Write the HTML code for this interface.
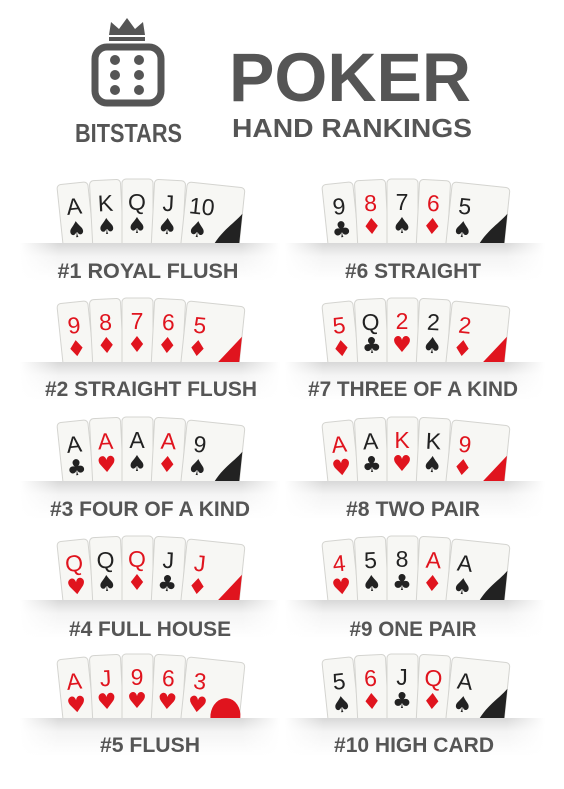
<!DOCTYPE html>
<html><head><meta charset="utf-8"><style>
html,body{margin:0;padding:0;background:#fff;}
svg{display:block;font-family:"Liberation Sans",sans-serif;}
.r{font-size:23px;text-anchor:middle;font-family:"Liberation Sans",sans-serif;}
.s{font-size:22px;text-anchor:middle;font-family:"DejaVu Sans",sans-serif;}
.b{fill:#222}.d{fill:#e0141e}
.lab{font-size:21px;font-weight:bold;fill:#555;text-anchor:middle;}
</style></head><body>
<svg width="564" height="789" viewBox="0 0 564 789" xmlns="http://www.w3.org/2000/svg">
<defs>
<linearGradient id="sh" x1="0" y1="0" x2="0" y2="1">
<stop offset="0" stop-color="#d8d8d8"/><stop offset="0.35" stop-color="#f4f4f4"/><stop offset="1" stop-color="#fff"/>
</linearGradient>
<linearGradient id="sf" x1="0" y1="0" x2="1" y2="0">
<stop offset="0" stop-color="#fff" stop-opacity="1"/><stop offset="0.15" stop-color="#fff" stop-opacity="0"/><stop offset="0.85" stop-color="#fff" stop-opacity="0"/><stop offset="1" stop-color="#fff" stop-opacity="1"/>
</linearGradient>
<g id="card"><rect x="0" y="0" width="31" height="72" rx="4" fill="#f7f7f4" stroke="#d4d4d0" stroke-width="1"/></g>
<g id="last"><rect x="0" y="0" width="58" height="72" rx="4" fill="#f7f7f4" stroke="#d4d4d0" stroke-width="1"/></g>
</defs>

<!-- logo -->
<g fill="#555">
<path d="M109 35 L111 22 L119 29 L127 18 L135 29 L143 22 L145 35 Z"/>
<rect x="109" y="37" width="36" height="4"/>
<rect x="95" y="47" width="66" height="56" rx="12" fill="none" stroke="#555" stroke-width="7"/>
<circle cx="115" cy="60" r="5"/><circle cx="139" cy="60" r="5"/>
<circle cx="115" cy="75" r="5"/><circle cx="139" cy="75" r="5"/>
<circle cx="115" cy="90" r="5"/><circle cx="139" cy="90" r="5"/>
<text x="75" y="142" font-size="26" font-weight="bold" textLength="107" lengthAdjust="spacingAndGlyphs">BITSTARS</text>
<text x="229" y="101" font-size="69" font-weight="bold" textLength="242" lengthAdjust="spacingAndGlyphs">POKER</text>
<text x="232" y="137" font-size="26" font-weight="bold" textLength="240" lengthAdjust="spacingAndGlyphs">HAND RANKINGS</text>
</g>

<!-- HAND 1 -->
<g transform="translate(64,183)">
<g transform="rotate(-6 15 70)" ><use href="#card"/><text class="r b" x="15" y="31">A</text><text class="s b" x="15" y="54">♠</text></g>
<g transform="translate(29,-3) rotate(-3 15 70)"><use href="#card"/><text class="r b" x="15" y="31">K</text><text class="s b" x="15" y="54">♠</text></g>
<g transform="translate(58,-4)"><use href="#card"/><text class="r b" x="15" y="31">Q</text><text class="s b" x="15" y="54">♠</text></g>
<g transform="translate(87,-3) rotate(3 15 70)"><use href="#card"/><text class="r b" x="15" y="31">J</text><text class="s b" x="15" y="54">♠</text></g>
<g transform="translate(116,0) rotate(6 15 70)"><use href="#last"/><text class="r b" x="17" y="31">10</text><text class="s b" x="15" y="54">♠</text><path class="b" d="M58 26 C50 38 36 46 28 72 L58 72 Z"/></g>
</g>
<!-- HAND 6 -->
<g transform="translate(329,183)">
<g transform="rotate(-6 15 70)"><use href="#card"/><text class="r b" x="15" y="31">9</text><text class="s b" x="15" y="54">♣</text></g>
<g transform="translate(29,-3) rotate(-3 15 70)"><use href="#card"/><text class="r d" x="15" y="31">8</text><text class="s d" x="15" y="54">♦</text></g>
<g transform="translate(58,-4)"><use href="#card"/><text class="r b" x="15" y="31">7</text><text class="s b" x="15" y="54">♠</text></g>
<g transform="translate(87,-3) rotate(3 15 70)"><use href="#card"/><text class="r d" x="15" y="31">6</text><text class="s d" x="15" y="54">♦</text></g>
<g transform="translate(116,0) rotate(6 15 70)"><use href="#last"/><text class="r b" x="15" y="31">5</text><text class="s b" x="15" y="54">♠</text><path class="b" d="M58 26 C50 38 36 46 28 72 L58 72 Z"/></g>
</g>
<!-- HAND 2 -->
<g transform="translate(64,302)">
<g transform="rotate(-6 15 70)"><use href="#card"/><text class="r d" x="15" y="31">9</text><text class="s d" x="15" y="54">♦</text></g>
<g transform="translate(29,-3) rotate(-3 15 70)"><use href="#card"/><text class="r d" x="15" y="31">8</text><text class="s d" x="15" y="54">♦</text></g>
<g transform="translate(58,-4)"><use href="#card"/><text class="r d" x="15" y="31">7</text><text class="s d" x="15" y="54">♦</text></g>
<g transform="translate(87,-3) rotate(3 15 70)"><use href="#card"/><text class="r d" x="15" y="31">6</text><text class="s d" x="15" y="54">♦</text></g>
<g transform="translate(116,0) rotate(6 15 70)"><use href="#last"/><text class="r d" x="15" y="31">5</text><text class="s d" x="15" y="54">♦</text><path class="d" d="M58 30 L26 72 L58 72 Z"/></g>
</g>
<!-- HAND 7 -->
<g transform="translate(329,302)">
<g transform="rotate(-6 15 70)"><use href="#card"/><text class="r d" x="15" y="31">5</text><text class="s d" x="15" y="54">♦</text></g>
<g transform="translate(29,-3) rotate(-3 15 70)"><use href="#card"/><text class="r b" x="15" y="31">Q</text><text class="s b" x="15" y="54">♣</text></g>
<g transform="translate(58,-4)"><use href="#card"/><text class="r d" x="15" y="31">2</text><text class="s d" x="15" y="54">♥</text></g>
<g transform="translate(87,-3) rotate(3 15 70)"><use href="#card"/><text class="r b" x="15" y="31">2</text><text class="s b" x="15" y="54">♠</text></g>
<g transform="translate(116,0) rotate(6 15 70)"><use href="#last"/><text class="r d" x="15" y="31">2</text><text class="s d" x="15" y="54">♦</text><path class="d" d="M58 30 L26 72 L58 72 Z"/></g>
</g>
<!-- HAND 3 -->
<g transform="translate(64,421)">
<g transform="rotate(-6 15 70)"><use href="#card"/><text class="r b" x="15" y="31">A</text><text class="s b" x="15" y="54">♣</text></g>
<g transform="translate(29,-3) rotate(-3 15 70)"><use href="#card"/><text class="r d" x="15" y="31">A</text><text class="s d" x="15" y="54">♥</text></g>
<g transform="translate(58,-4)"><use href="#card"/><text class="r b" x="15" y="31">A</text><text class="s b" x="15" y="54">♠</text></g>
<g transform="translate(87,-3) rotate(3 15 70)"><use href="#card"/><text class="r d" x="15" y="31">A</text><text class="s d" x="15" y="54">♦</text></g>
<g transform="translate(116,0) rotate(6 15 70)"><use href="#last"/><text class="r b" x="15" y="31">9</text><text class="s b" x="15" y="54">♠</text><path class="b" d="M58 26 C50 38 36 46 28 72 L58 72 Z"/></g>
</g>
<!-- HAND 8 -->
<g transform="translate(329,421)">
<g transform="rotate(-6 15 70)"><use href="#card"/><text class="r d" x="15" y="31">A</text><text class="s d" x="15" y="54">♥</text></g>
<g transform="translate(29,-3) rotate(-3 15 70)"><use href="#card"/><text class="r b" x="15" y="31">A</text><text class="s b" x="15" y="54">♣</text></g>
<g transform="translate(58,-4)"><use href="#card"/><text class="r d" x="15" y="31">K</text><text class="s d" x="15" y="54">♥</text></g>
<g transform="translate(87,-3) rotate(3 15 70)"><use href="#card"/><text class="r b" x="15" y="31">K</text><text class="s b" x="15" y="54">♠</text></g>
<g transform="translate(116,0) rotate(6 15 70)"><use href="#last"/><text class="r d" x="15" y="31">9</text><text class="s d" x="15" y="54">♦</text><path class="d" d="M58 30 L26 72 L58 72 Z"/></g>
</g>
<!-- HAND 4 -->
<g transform="translate(64,540)">
<g transform="rotate(-6 15 70)"><use href="#card"/><text class="r d" x="15" y="31">Q</text><text class="s d" x="15" y="54">♥</text></g>
<g transform="translate(29,-3) rotate(-3 15 70)"><use href="#card"/><text class="r b" x="15" y="31">Q</text><text class="s b" x="15" y="54">♠</text></g>
<g transform="translate(58,-4)"><use href="#card"/><text class="r d" x="15" y="31">Q</text><text class="s d" x="15" y="54">♦</text></g>
<g transform="translate(87,-3) rotate(3 15 70)"><use href="#card"/><text class="r b" x="15" y="31">J</text><text class="s b" x="15" y="54">♣</text></g>
<g transform="translate(116,0) rotate(6 15 70)"><use href="#last"/><text class="r d" x="15" y="31">J</text><text class="s d" x="15" y="54">♦</text><path class="d" d="M58 30 L26 72 L58 72 Z"/></g>
</g>
<!-- HAND 9 -->
<g transform="translate(329,540)">
<g transform="rotate(-6 15 70)"><use href="#card"/><text class="r d" x="15" y="31">4</text><text class="s d" x="15" y="54">♥</text></g>
<g transform="translate(29,-3) rotate(-3 15 70)"><use href="#card"/><text class="r b" x="15" y="31">5</text><text class="s b" x="15" y="54">♠</text></g>
<g transform="translate(58,-4)"><use href="#card"/><text class="r b" x="15" y="31">8</text><text class="s b" x="15" y="54">♣</text></g>
<g transform="translate(87,-3) rotate(3 15 70)"><use href="#card"/><text class="r d" x="15" y="31">A</text><text class="s d" x="15" y="54">♦</text></g>
<g transform="translate(116,0) rotate(6 15 70)"><use href="#last"/><text class="r b" x="15" y="31">A</text><text class="s b" x="15" y="54">♠</text><path class="b" d="M58 26 C50 38 36 46 28 72 L58 72 Z"/></g>
</g>
<!-- HAND 5 -->
<g transform="translate(64,658)">
<g transform="rotate(-6 15 70)"><use href="#card"/><text class="r d" x="15" y="31">A</text><text class="s d" x="15" y="54">♥</text></g>
<g transform="translate(29,-3) rotate(-3 15 70)"><use href="#card"/><text class="r d" x="15" y="31">J</text><text class="s d" x="15" y="54">♥</text></g>
<g transform="translate(58,-4)"><use href="#card"/><text class="r d" x="15" y="31">9</text><text class="s d" x="15" y="54">♥</text></g>
<g transform="translate(87,-3) rotate(3 15 70)"><use href="#card"/><text class="r d" x="15" y="31">6</text><text class="s d" x="15" y="54">♥</text></g>
<g transform="translate(116,0) rotate(6 15 70)"><use href="#last"/><text class="r d" x="15" y="31">3</text><text class="s d" x="15" y="54">♥</text><ellipse class="d" cx="44" cy="55" rx="15" ry="18"/></g>
</g>
<!-- HAND 10 -->
<g transform="translate(329,658)">
<g transform="rotate(-6 15 70)"><use href="#card"/><text class="r b" x="15" y="31">5</text><text class="s b" x="15" y="54">♠</text></g>
<g transform="translate(29,-3) rotate(-3 15 70)"><use href="#card"/><text class="r d" x="15" y="31">6</text><text class="s d" x="15" y="54">♦</text></g>
<g transform="translate(58,-4)"><use href="#card"/><text class="r b" x="15" y="31">J</text><text class="s b" x="15" y="54">♣</text></g>
<g transform="translate(87,-3) rotate(3 15 70)"><use href="#card"/><text class="r d" x="15" y="31">Q</text><text class="s d" x="15" y="54">♦</text></g>
<g transform="translate(116,0) rotate(6 15 70)"><use href="#last"/><text class="r b" x="15" y="31">A</text><text class="s b" x="15" y="54">♠</text><path class="b" d="M58 26 C50 38 36 46 28 72 L58 72 Z"/></g>
</g>

<!-- shelves -->
<g>
<rect x="20" y="243" width="260" height="38" fill="url(#sh)"/><rect x="285" y="243" width="260" height="38" fill="url(#sh)"/>
<rect x="20" y="362" width="260" height="38" fill="url(#sh)"/><rect x="285" y="362" width="260" height="38" fill="url(#sh)"/>
<rect x="20" y="481" width="260" height="38" fill="url(#sh)"/><rect x="285" y="481" width="260" height="38" fill="url(#sh)"/>
<rect x="20" y="600" width="260" height="38" fill="url(#sh)"/><rect x="285" y="600" width="260" height="38" fill="url(#sh)"/>
<rect x="20" y="718" width="260" height="38" fill="url(#sh)"/><rect x="285" y="718" width="260" height="38" fill="url(#sh)"/>
</g>
<g>
<rect x="20" y="243" width="260" height="40" fill="url(#sf)"/><rect x="285" y="243" width="260" height="40" fill="url(#sf)"/>
<rect x="20" y="362" width="260" height="40" fill="url(#sf)"/><rect x="285" y="362" width="260" height="40" fill="url(#sf)"/>
<rect x="20" y="481" width="260" height="40" fill="url(#sf)"/><rect x="285" y="481" width="260" height="40" fill="url(#sf)"/>
<rect x="20" y="600" width="260" height="40" fill="url(#sf)"/><rect x="285" y="600" width="260" height="40" fill="url(#sf)"/>
<rect x="20" y="718" width="260" height="40" fill="url(#sf)"/><rect x="285" y="718" width="260" height="40" fill="url(#sf)"/>
</g>

<!-- labels -->
<text class="lab" x="148" y="278" textLength="181" lengthAdjust="spacingAndGlyphs">#1 ROYAL FLUSH</text>
<text class="lab" x="413" y="278" textLength="136" lengthAdjust="spacingAndGlyphs">#6 STRAIGHT</text>
<text class="lab" x="151" y="396" textLength="212" lengthAdjust="spacingAndGlyphs">#2 STRAIGHT FLUSH</text>
<text class="lab" x="413" y="396" textLength="210" lengthAdjust="spacingAndGlyphs">#7 THREE OF A KIND</text>
<text class="lab" x="150" y="516" textLength="200" lengthAdjust="spacingAndGlyphs">#3 FOUR OF A KIND</text>
<text class="lab" x="413" y="516" textLength="134" lengthAdjust="spacingAndGlyphs">#8 TWO PAIR</text>
<text class="lab" x="150" y="636" textLength="162" lengthAdjust="spacingAndGlyphs">#4 FULL HOUSE</text>
<text class="lab" x="413" y="636" textLength="127" lengthAdjust="spacingAndGlyphs">#9 ONE PAIR</text>
<text class="lab" x="150" y="752" textLength="100" lengthAdjust="spacingAndGlyphs">#5 FLUSH</text>
<text class="lab" x="414" y="752" textLength="160" lengthAdjust="spacingAndGlyphs">#10 HIGH CARD</text>
</svg>
</body></html>
